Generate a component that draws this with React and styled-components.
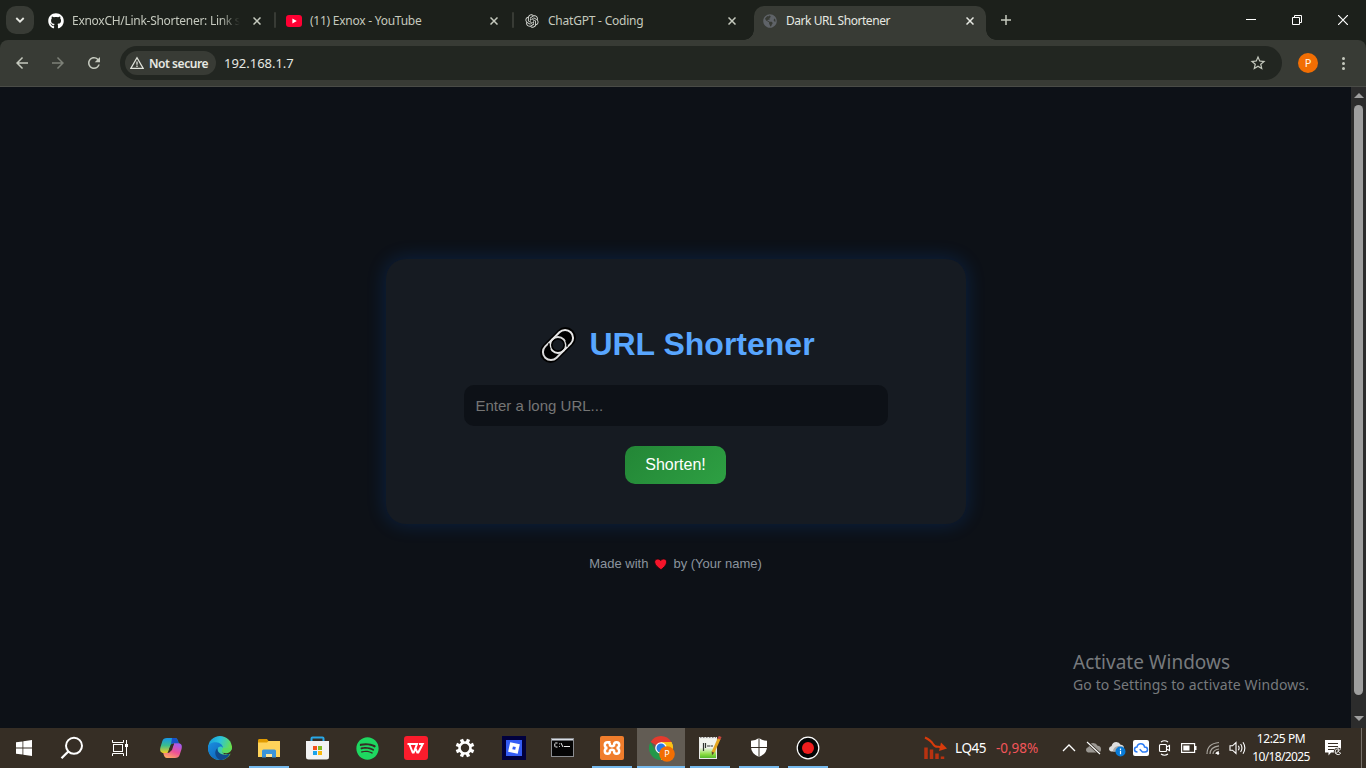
import React from "react";
import styled, { createGlobalStyle, css } from "styled-components";
import { FaGithub, FaGlobeAmericas, FaSpotify } from "react-icons/fa";
import { RiOpenaiFill } from "react-icons/ri";
import { MdArrowBack, MdArrowForward, MdRefresh, MdStarBorder } from "react-icons/md";

const uiFont = `"Noto Sans", "Open Sans", sans-serif`;

const GlobalStyle = createGlobalStyle`
  * { box-sizing: border-box; }
  body { margin: 0; background: #0d1117; overflow: hidden; }
  svg { display: block; flex: none; }
`;

const Screen = styled.div`
  width: 1366px;
  height: 768px;
  display: flex;
  flex-direction: column;
  overflow: hidden;
  font-family: ${uiFont};
  background: #1c201b;
`;

/* ---------- Browser chrome ---------- */

const TabStrip = styled.div`
  height: 40px;
  flex: none;
  display: flex;
  align-items: flex-end;
  padding-left: 6px;
  background: #1c201b;
`;

const TabSearch = styled.div`
  width: 28px;
  height: 28px;
  margin: 0 6px 6px 0;
  border-radius: 10px;
  background: #383b35;
  display: grid;
  place-items: center;
`;

const Tab = styled.div`
  position: relative;
  width: 232px;
  height: 34px;
  margin-right: 6px;
  padding: 0 12px 5px 8px;
  display: flex;
  align-items: center;
  color: ${(p) => (p.$active ? "#e6e8e2" : "#c5c9be")};
  ${(p) =>
    p.$active &&
    css`
      background: #383b35;
      border-radius: 10px 10px 0 0;
      &::before,
      &::after {
        content: "";
        position: absolute;
        bottom: 0;
        width: 10px;
        height: 10px;
      }
      &::before {
        left: -10px;
        background: radial-gradient(circle at 0 0, transparent 9.5px, #383b35 10px);
      }
      &::after {
        right: -10px;
        background: radial-gradient(circle at 100% 0, transparent 9.5px, #383b35 10px);
      }
    `}
  ${(p) =>
    p.$divided &&
    css`
      &::after {
        content: "";
        position: absolute;
        right: -4px;
        top: 6px;
        width: 2px;
        height: 16px;
        border-radius: 1px;
        background: #383b35;
      }
    `}
`;

const Favicon = styled.span`
  width: 16px;
  height: 16px;
  margin-right: 8px;
  display: grid;
  place-items: center;
  flex: none;
`;

const TabTitle = styled.span`
  flex: 1;
  white-space: nowrap;
  font-size: 12px;
  line-height: 18px;
  letter-spacing: ${(p) => p.$spacing || "0"};
  margin-right: 6px;
  ${(p) => p.$fade && "mask-image: linear-gradient(90deg, #000 148px, transparent 168px);"}
`;

const NewTab = styled.div`
  width: 28px;
  height: 28px;
  margin-bottom: 6px;
  display: grid;
  place-items: center;
`;

const WindowControls = styled.div`
  margin-left: auto;
  height: 40px;
  display: flex;
`;

const WindowButton = styled.div`
  width: 46px;
  height: 40px;
  display: grid;
  place-items: center;
`;

const ToolbarBack = styled.div`
  background: #1c201b;
  flex: none;
`;

const Toolbar = styled.div`
  height: 47px;
  display: flex;
  align-items: center;
  background: #383b35;
  border-radius: 8px 8px 0 0;
  border-bottom: 1px solid #4a4c47;
  padding: 0 4px;
`;

const NavButton = styled.div`
  width: 36px;
  height: 34px;
  display: grid;
  place-items: center;
  color: ${(p) => (p.$dim ? "#7d8178" : "#c5c9be")};
`;

const Omnibox = styled.div`
  width: 1162px;
  height: 34px;
  margin-left: 8px;
  padding: 0 15px 0 5px;
  border-radius: 17px;
  background: #222621;
  display: flex;
  align-items: center;
  color: #e6e8e2;
`;

const SecurityChip = styled.div`
  width: 91px;
  height: 24px;
  padding-left: 5px;
  border-radius: 12px;
  background: #383b35;
  display: flex;
  align-items: center;
  gap: 5px;
  font-size: 12px;
  font-weight: 600;
  letter-spacing: -0.45px;
  white-space: nowrap;
`;

const Address = styled.span`
  flex: 1;
  margin-left: 8px;
  font-size: 13px;
  letter-spacing: -0.02px;
  line-height: 18px;
  margin-bottom: 1px;
`;

const Avatar = styled.div`
  width: 20px;
  height: 20px;
  margin-left: 16px;
  border-radius: 50%;
  background: #f26e03;
  color: #fff3e6;
  font-size: 11px;
  line-height: 20px;
  text-align: center;
`;

const MenuDots = styled.div`
  width: 19px;
  margin-left: 16px;
  display: flex;
  flex-direction: column;
  align-items: center;
  gap: 2px;
`;

const Dot = styled.i`
  width: 3px;
  height: 3px;
  border-radius: 50%;
  background: #c5c9be;
`;

/* ---------- Web page ---------- */

const Viewport = styled.div`
  position: relative;
  flex: 1;
  min-height: 0;
  display: flex;
`;

const Page = styled.main`
  flex: 1;
  padding-top: 172px;
  display: flex;
  flex-direction: column;
  align-items: center;
  background: #0d1117;
  font-family: "Liberation Sans", Arial, sans-serif;
`;

const Card = styled.section`
  width: 580px;
  height: 265px;
  padding-top: 65px;
  display: flex;
  flex-direction: column;
  align-items: center;
  border-radius: 20px;
  background: #161b22;
  box-shadow: 0 0 20px rgba(0, 110, 255, 0.2);
`;

const Heading = styled.h1`
  height: 41px;
  margin: 0 0 20px;
  display: flex;
  align-items: center;
  gap: 12px;
  padding-left: 3px;
  color: #58a6ff;
  font-size: 32px;
  line-height: 41px;
  white-space: nowrap;
`;

const UrlInput = styled.input`
  width: 424px;
  height: 41px;
  padding: 0 12px;
  border: 0;
  border-radius: 10px;
  outline: 0;
  background: #0d1117;
  color: #c9d1d9;
  font: 15px "Liberation Sans", Arial, sans-serif;
  &::placeholder { color: #757575; }
`;

const ShortenButton = styled.button`
  width: 101px;
  height: 38px;
  margin-top: 20px;
  padding: 0;
  border: 0;
  border-radius: 10px;
  background: linear-gradient(135deg, #238636, #2ea043);
  color: #fff;
  font: 16px "Liberation Sans", Arial, sans-serif;
`;

const Footer = styled.footer`
  margin-top: 31px;
  display: flex;
  align-items: center;
  gap: 5px;
  color: #8b949e;
  font-size: 13px;
  line-height: 18px;
`;

const Scrollbar = styled.div`
  width: 15px;
  display: flex;
  flex-direction: column;
  align-items: center;
  background: #2c2c2c;
`;

const ScrollArrow = styled.div`
  width: 0;
  height: 0;
  border: solid transparent;
  border-width: ${(p) => (p.$down ? "5px 5px 0" : "0 5px 5px")};
  border-color: ${(p) => (p.$down ? "#9f9f9f transparent transparent" : "transparent transparent #9f9f9f")};
  margin: ${(p) => (p.$down ? "auto 0 7px" : "6px 0 7px")};
`;

const ScrollThumb = styled.div`
  width: 9px;
  height: 590px;
  border-radius: 5px;
  background: #9f9f9f;
`;

/* Floats over the page content in the lower right corner. */
const Watermark = styled.aside`
  position: absolute;
  left: 1073px;
  bottom: 33px;
  color: #777a7d;
  white-space: nowrap;
`;

const WatermarkTitle = styled.div`
  font-size: 19px;
  line-height: 25px;
`;

const WatermarkText = styled.div`
  font-size: 14px;
  line-height: 20px;
  letter-spacing: 0.12px;
`;

/* ---------- Taskbar ---------- */

const Taskbar = styled.nav`
  height: 40px;
  flex: none;
  display: flex;
  background: #362e25;
  color: #fff;
`;

const TaskGroup = styled.div`
  display: flex;
  gap: ${(p) => p.$gap || 0}px;
  margin-right: ${(p) => p.$after || 0}px;
`;

const TaskItem = styled.div`
  width: 48px;
  height: 40px;
  display: grid;
  place-items: center;
  background: ${(p) => (p.$active ? "#625c54" : "transparent")};
  box-shadow: ${(p) => (p.$active ? "inset 0 -2px #76b9ed" : "none")};
  ${(p) =>
    p.$running &&
    css`
      background: linear-gradient(#76b9ed, #76b9ed) center bottom / 40px 2px no-repeat;
    `}
`;

const Ticker = styled.div`
  margin-left: 92px;
  width: 133px;
  display: flex;
  align-items: center;
  font-size: 13.5px;
  white-space: nowrap;
`;

const TickerName = styled.span`
  width: 41px;
  margin-left: 7px;
  letter-spacing: -0.4px;
`;

const TickerChange = styled.span`
  color: #f2555a;
  letter-spacing: -0.05px;
`;

const Tray = styled.div`
  display: flex;
`;

const TrayIcon = styled.div`
  width: 24px;
  height: 40px;
  display: grid;
  place-items: center;
`;

const Clock = styled.div`
  width: 64px;
  padding-top: 2px;
  font-size: 12px;
  line-height: 18px;
  letter-spacing: ${(p) => p.$spacing};
  text-align: center;
  white-space: nowrap;
`;

const ClockDate = styled.div`
  letter-spacing: -0.65px;
`;

const ClockTime = styled.div`
  letter-spacing: -0.45px;
`;

const Notifications = styled.div`
  width: 41px;
  display: grid;
  place-items: center;
`;

const ShowDesktop = styled.div`
  width: 5px;
  margin-left: auto;
  border-left: 1px solid #77716a;
`;

/* ---------- Icons ---------- */

const CloseIcon = ({ color }) => (
  <svg width="8" height="8" viewBox="0 0 8 8" stroke={color} strokeWidth="1.5">
    <path d="M.5.5l7 7M7.5.5l-7 7" />
  </svg>
);

const YouTubeIcon = () => (
  <svg width="16" height="12" viewBox="0 0 16 12">
    <rect width="16" height="12" rx="3" fill="#ff0033" />
    <path d="M6.4 3.4v5.2L10.8 6z" fill="#fff" />
  </svg>
);

const WarningIcon = () => (
  <svg width="14" height="14" viewBox="0 0 14 14" fill="none" stroke="#dfe2da" strokeWidth="1.3">
    <path d="M7 1.7L13.1 12.3H.9z" />
    <path d="M7 5.4v3.4M7 9.6v1.4" />
  </svg>
);

const ChainIcon = () => (
  <svg width="38" height="38" viewBox="0 0 38 38" fill="none">
    <g transform="rotate(-45 19 19)">
      <rect x="-2" y="8.500" width="42" height="21" rx="10.500" fill="#000" />
      <rect x="1" y="11" width="26" height="16" rx="8" stroke="#d9d9d9" strokeWidth="2" />
      <rect x="11" y="11" width="26" height="16" rx="8" stroke="#e6e6e6" strokeWidth="2" />
      <circle cx="19" cy="19" r="5.300" fill="#161b22" />
      <path d="M10.300 16.500a9.300 9.300 0 0 1 3.500-5M27.700 21.500a9.300 9.300 0 0 1-3.500 5" stroke="#000" strokeWidth="1.500" />
    </g>
  </svg>
);

const HeartIcon = () => (
  <svg width="15" height="14" viewBox="0 0 15 14">
    <path
      d="M8 12.700C5.500 11 1.800 8.200 1.600 5 1.600 1.900 5.700.9 7.700 3.600 9.700.9 13.700 1.900 13.700 5 13.500 8.200 10.300 11 8 12.700z"
      fill="#f5142a"
      stroke="#14080b"
      strokeWidth=".8"
    />
  </svg>
);

const WindowsIcon = () => (
  <svg width="16" height="16" viewBox="0 0 16 16" fill="#fff">
    <path d="M0 2.300L6.500 1.400V7.600H0zM7.300 1.300L16 0v7.600H7.300zM0 8.400h6.500v6.200L0 13.700zM7.300 8.400H16V16l-8.700-1.200z" />
  </svg>
);

const SearchIcon = () => (
  <svg width="24" height="24" viewBox="0 0 24 24" fill="none" stroke="#fff" strokeWidth="2">
    <circle cx="14" cy="9.800" r="8" />
    <path d="M8.300 15.500L1.500 22.300" strokeWidth="2.300" />
  </svg>
);

const TaskViewIcon = () => (
  <svg width="18" height="16" viewBox="0 0 18 16" fill="none" stroke="#fff" strokeWidth="1">
    <rect x="2.500" y="4.500" width="9" height="7" />
    <path d="M1.500 0v2.500h11V0M1.500 16v-2.500h11V16M15.500 0v16" />
    <rect x="14" y="4" width="3" height="3" fill="#fff" stroke="none" />
  </svg>
);

const CopilotIcon = () => (
  <svg width="24" height="24" viewBox="0 0 24 24">
    <defs>
      <linearGradient id="copA" x1="0" y1="0" x2="0" y2="1">
        <stop offset="0" stopColor="#1697ea" />
        <stop offset=".5" stopColor="#3bbd8c" />
        <stop offset="1" stopColor="#f3cd22" />
      </linearGradient>
      <linearGradient id="copB" x1=".7" y1="0" x2=".2" y2="1">
        <stop offset="0" stopColor="#a35df2" />
        <stop offset=".5" stopColor="#ee5096" />
        <stop offset="1" stopColor="#ffad62" />
      </linearGradient>
    </defs>
    <path d="M8 2h8c2 0 2.500 1.500 3 3l.7 2.200H15c-2 0-3 1-3.600 3L8.500 17H5c-3.500 0-4.500-2.300-3.500-6L3.300 5.200C4 3 5.500 2 8 2z" fill="url(#copA)" />
    <path d="M13 2h3c2 0 2.500 1.500 3 3l.7 2.200H15c-1.500 0-2.500.6-3.100 1.700z" fill="#1851c9" />
    <path d="M16 22H8c-2 0-2.700-1.500-3.200-3L4.200 17H8.500c2 0 3-1 3.600-3L15 7.200h4c3.500 0 4.500 2.300 3.500 6L20.700 18.800C20 21 18.500 22 16 22z" fill="url(#copB)" />
    <path d="M10.300 12.500l1.600-4 3.100-.8-2.100 6.500-3 1.500z" fill="#362e25" />
  </svg>
);

const EdgeIcon = () => (
  <svg width="24" height="24" viewBox="0 0 24 24">
    <defs>
      <linearGradient id="edgeTop" x1="0" y1="0" x2="1" y2=".4">
        <stop offset="0" stopColor="#1597da" />
        <stop offset=".5" stopColor="#2bc3dc" />
        <stop offset="1" stopColor="#6ce146" />
      </linearGradient>
      <linearGradient id="edgeLow" x1="0" y1="0" x2="1" y2="1">
        <stop offset="0" stopColor="#1a8fe0" />
        <stop offset="1" stopColor="#0b57ae" />
      </linearGradient>
    </defs>
    <circle cx="12" cy="12" r="12" fill="url(#edgeTop)" />
    <path d="M0 12C.3 7.500 4.500 6 8 6.200c4 .2 7 2.800 7 5.800-1-2.200-4.500-2-5.300.5-1.200 4 3.300 7.500 8 6.500 1.700-.4 3-1 4.300-1.800C20 21.500 16.300 24 12 24 5 24 0 18.500 0 12z" fill="url(#edgeLow)" />
    <path d="M9.500 12c-3.500 3-3 9 2.500 12 4.300 0 8-2.500 10-6.800-4.500 3-9.500 1.300-11.500-1.200-.9-1.200-1.200-2.500-1-4z" fill="#114a8b" />
    <path d="M14.500 15.600c-1 .4 1.500 2.200 4.500 1.600 3-.5 5-3 5-5.200l1 5-3 1-6 .2z" fill="#362e25" />
    <path d="M15 12c.2 1.500-1 2-1 3 0 1.500 2.500 2.200 5 1.600 2.700-.6 4.700-2.600 5-4.600z" fill="#5adb60" />
  </svg>
);

const ExplorerIcon = () => (
  <svg width="22" height="19" viewBox="0 0 22 19">
    <path d="M0 1.500Q0 0 1 0h8l1.500 2H21q1 0 1 1v4H0z" fill="#e09a00" />
    <path d="M0 3.500h9L10.500 2H22v16H0z" fill="#ffd35a" />
    <path d="M4 18.500V12q0-1.500 1.500-1.500h11Q18 10.500 18 12v6.500h-4V15H8v3.500z" fill="#3b94da" />
    <path d="M8 15h6v3H8z" fill="#ffe59b" />
  </svg>
);

const StoreIcon = () => (
  <svg width="24" height="24" viewBox="0 0 24 24">
    <path d="M5.500 6V2.500Q5.500 1.500 6.500 1.500h10q1 0 1 1V6" fill="none" stroke="#28a8e8" strokeWidth="2" />
    <path d="M0 5h23v16q0 2.500-2.500 2.500H2.500Q0 23.500 0 21z" fill="#f2f2f2" />
    <path d="M7 10h4v4H7z" fill="#f1511b" />
    <path d="M12 10h4v4h-4z" fill="#80bb22" />
    <path d="M7 15h4v4H7z" fill="#1aa3ea" />
    <path d="M12 15h4v4h-4z" fill="#fbb80c" />
  </svg>
);

const WpsIcon = () => (
  <svg width="24" height="24" viewBox="0 0 24 24">
    <rect width="24" height="24" rx="3" fill="#fb1c2c" />
    <path d="M3.500 8H13L9.700 16.500h-1L5.300 8M11 11.500l2.300 5h1L18.700 8H15" fill="none" stroke="#fff" strokeWidth="2" />
  </svg>
);

const GearIcon = () => (
  <svg width="20" height="20" viewBox="-10 -10 20 20">
    <circle r="5.500" fill="none" stroke="#fff" strokeWidth="2.600" />
    {[22.5, 67.5, 112.5, 157.5, 202.5, 247.5, 292.5, 337.5].map((a) => (
      <rect key={a} x="-1.700" y="-9.300" width="3.400" height="3.500" fill="#fff" transform={`rotate(${a})`} />
    ))}
  </svg>
);

const RobloxIcon = () => (
  <svg width="24" height="24" viewBox="0 0 24 24">
    <path d="M0 0h24v24H0z" fill="#00003e" />
    <path d="M4 4h16v16H4z" fill="#345cf5" />
    <path d="M8.200 6.200l9.600 2.100-2.100 9.500-9.600-2.100z" fill="#fff" />
    <path d="M10.900 10.400l2.900.6-.6 2.800-2.900-.6z" fill="#345cf5" />
  </svg>
);

const TerminalIcon = () => (
  <svg width="24" height="20" viewBox="0 0 24 20">
    <rect x=".5" y=".5" width="22" height="18" fill="#050505" stroke="#8b8d90" />
    <path d="M1 1h21v1.500H1z" fill="#d9dde5" />
    <path d="M6.500 5h-2l-.7.7v2.600l.7.700h2M8.500 5.500v.8M8.500 8v.8M10 5l2 4M13 8.500h6" stroke="#eee" fill="none" strokeWidth="1" />
  </svg>
);

const XamppIcon = () => (
  <svg width="24" height="24" viewBox="0 0 24 24">
    <rect width="24" height="24" rx="2" fill="#f07d2c" />
    <path
      d="M10.500 6.200H7.500Q4.800 6.200 4.800 9q0 2.500 2.500 3-2.500.5-2.500 3 0 2.800 2.700 2.800 2.500 0 2.500-2.800v-.5q2-1.500 4 0v.5q0 2.800 2.500 2.800 2.700 0 2.700-2.800 0-2.500-2.500-3 2.500-.5 2.500-3 0-2.800-2.700-2.800Q14 6.200 14 9v.5q-2 1.300-4 0V9q0-2.800-2.500-2.800"
      fill="none"
      stroke="#fff"
      strokeWidth="2.500"
    />
  </svg>
);

const ChromeIcon = () => (
  <svg width="28" height="28" viewBox="-1 -1 28 28">
    <path d="M13 13L2.600 7A12 12 0 0 1 23.400 7z" fill="#e33b2e" />
    <path d="M13 13h11.900A12 12 0 0 0 23.400 7H13z" fill="#fbc116" />
    <path d="M13 13l10.400-6A12 12 0 0 1 13 25z" fill="#fbc116" />
    <path d="M13 13v12A12 12 0 0 1 2.600 7L7.800 16z" fill="#229849" />
    <circle cx="13" cy="13" r="5.800" fill="#fff" />
    <circle cx="13" cy="13" r="4.500" fill="#2878e7" />
    <circle cx="19" cy="19" r="7.800" fill="#f26e03" />
    <text x="19" y="22.300" textAnchor="middle" fill="#fff" fontFamily="Noto Sans, sans-serif" fontSize="9">P</text>
  </svg>
);

const NotepadIcon = () => (
  <svg width="24" height="24" viewBox="0 0 24 24">
    <defs>
      <linearGradient id="note" x1="0" y1="0" x2="0" y2="1">
        <stop offset=".45" stopColor="#f1f4ee" />
        <stop offset=".8" stopColor="#8cdd42" />
        <stop offset="1" stopColor="#54b82c" />
      </linearGradient>
    </defs>
    <path d="M1 1h18v22H1z" fill="#e9eae7" />
    <path d="M2 3h16v19H2z" fill="url(#note)" />
    <path d="M2 1.500h16" stroke="#868686" strokeDasharray="1.500 1.500" />
    <path d="M5.500 7v8M7.500 7v5M9 10h3M12.500 10h2.500" stroke="#303530" strokeWidth="1.200" />
    <path d="M21.200 2.500L15 16.300" stroke="#e5a71f" strokeWidth="3" />
    <path d="M22.200.5L21 3.200" stroke="#c4453e" strokeWidth="3" />
    <path d="M13.600 15.500l2.700 1.200-2.300 2.500z" fill="#5d4728" />
  </svg>
);

const ShieldIcon = () => (
  <svg width="18" height="20" viewBox="0 0 18 20">
    <path d="M9 0q3.500 2.700 8 2.700V9Q17 15.500 9 19 1 15.500 1 9V2.700Q5.500 2.700 9 0z" fill="#fff" />
    <path d="M9 0v20M0 9.500h18" stroke="#362e25" strokeWidth="1" />
  </svg>
);

const RecordIcon = () => (
  <svg width="24" height="24" viewBox="0 0 24 24">
    <circle cx="12" cy="12" r="10.800" fill="#050505" stroke="#fff" strokeWidth="1.200" />
    <circle cx="12" cy="12" r="6" fill="#ef1d1d" />
  </svg>
);

const FallingChartIcon = () => (
  <svg width="24" height="24" viewBox="0 0 24 24" fill="none" stroke="#d83b0b">
    <path d="M1 1.500Q7 4.500 9 8t6 2.700l3.500 1" strokeWidth="2" />
    <path d="M17 6.500l6 6-8 2.500" fill="#d83b0b" stroke="none" />
    <path d="M2 11.500V23M7.500 13.500V23M13 17.500V23M18.500 20.500V23" strokeWidth="3.500" stroke="#b93210" />
  </svg>
);

const CloudPath = "M4.500 12.500Q1 12.500 1 9.700 1 7.500 3.600 7 4.500 3 8.300 3q3 0 4.300 2.800 3.400.3 3.400 3.400 0 3.300-3.300 3.300z";

const trayIcons = [
  <svg width="14" height="8" viewBox="0 0 14 8" fill="none" stroke="#fff" strokeWidth="1.300">
    <path d="M1 7l6-6 6 6" />
  </svg>,
  <svg width="17" height="16" viewBox="0 0 17 16">
    <path d={CloudPath} fill="#9b9792" />
    <path d="M2 2l13 12" stroke="#362e25" strokeWidth="3" />
    <path d="M2 2l13 12" stroke="#fff" strokeWidth="1.100" />
  </svg>,
  <svg width="18" height="18" viewBox="0 0 18 18">
    <path d={CloudPath} fill="#dedede" />
    <path d="M5 12.500Q5 8 10 7l6 1v4.500z" fill="#aaa" />
    <circle cx="12.500" cy="12.500" r="5" fill="#087bd8" />
    <path d="M12.500 11.700v3.600M12.500 9.500V11" stroke="#fff" strokeWidth="1.200" />
  </svg>,
  <svg width="16" height="16" viewBox="0 0 16 16">
    <rect width="16" height="16" rx="2" fill="#fff" />
    <path d="M4.500 12Q1.500 12 1.500 9.500T4 7Q4.500 3.700 7.800 3.700T11.500 7Q14.500 7 14.500 9.500T12 12H9.500L6.700 9.200" fill="none" stroke="#2b7cf5" strokeWidth="1.500" />
  </svg>,
  <svg width="14" height="16" viewBox="0 0 14 16" fill="none" stroke="#fff" strokeWidth="1.100">
    <rect x="1.500" y="4.500" width="7" height="7" rx="1" />
    <path d="M8.500 7l3-1.500v5L8.500 9M3 2Q6.500-.5 10 2M3 14q3.500 2.500 7 0" />
  </svg>,
  <svg width="16" height="10" viewBox="0 0 16 10">
    <rect x=".6" y=".6" width="13" height="8.800" fill="none" stroke="#fff" strokeWidth="1.200" />
    <path d="M2.300 2.500h6.200v5H2.300zM14 3h1.500v4H14z" fill="#fff" />
  </svg>,
  <svg width="14" height="14" viewBox="0 0 14 14" fill="none" stroke="#aaa69f" strokeWidth="1.200">
    <path d="M1 13Q1 2.500 13 1.500M4 13Q4 6 13 4.800M7 13Q7 9 13 8" />
    <path d="M10 13q.3-2 3-2.200" stroke="#fff" />
    <circle cx="12" cy="12.500" r="1.200" fill="#fff" stroke="none" />
  </svg>,
  <svg width="17" height="14" viewBox="0 0 17 14" fill="none" stroke="#fff" strokeWidth="1.100">
    <path d="M1 4.800h2.500L7 1.500v11L3.500 9.200H1zM9.300 4.700q1.600 2.300 0 4.600M11.600 3q2.700 4 0 8M14 1.300q3.700 5.700 0 11.400" />
  </svg>,
];

const NoticeIcon = () => (
  <svg width="17" height="16" viewBox="0 0 17 16">
    <path d="M0 0h16v12.500H6L3.500 15.500v-3H0z" fill="#fff" />
    <path d="M3 3.500h10M3 6.500h10M3 9.500h6" stroke="#362e25" strokeWidth="1.200" />
    <circle cx="12.800" cy="11.800" r="4" fill="#362e25" />
    <path d="M13.500 8.700a3 3 0 1 0 2.200 4.500 3.500 3.500 0 0 1-2.200-4.500zM10.500 14l5-5" fill="none" stroke="#fff" strokeWidth=".9" />
  </svg>
);

/* ---------- Data ---------- */

const tabs = [
  { title: "ExnoxCH/Link-Shortener: Link sh", icon: <FaGithub size={16} color="#fff" />, divided: true, fade: true, spacing: "-0.28px" },
  { title: "(11) Exnox - YouTube", icon: <YouTubeIcon />, divided: true, spacing: "-0.25px" },
  { title: "ChatGPT - Coding", icon: <RiOpenaiFill size={16} color="#dadcd7" />, spacing: "-0.22px" },
  { title: "Dark URL Shortener", icon: <FaGlobeAmericas size={14} color="#5f6368" />, active: true, spacing: "-0.45px" },
];

const pinnedApps = [
  { icon: <CopilotIcon /> },
  { icon: <EdgeIcon /> },
  { icon: <ExplorerIcon />, running: true },
  { icon: <StoreIcon /> },
  { icon: <FaSpotify size={23} color="#1ed760" /> },
  { icon: <WpsIcon /> },
  { icon: <GearIcon /> },
  { icon: <RobloxIcon /> },
  { icon: <TerminalIcon /> },
  { icon: <XamppIcon />, running: true },
  { icon: <ChromeIcon />, active: true },
  { icon: <NotepadIcon />, running: true },
  { icon: <ShieldIcon />, running: true },
  { icon: <RecordIcon />, running: true },
];

export default function App() {
  return (
    <Screen>
      <GlobalStyle />
      <TabStrip>
        <TabSearch>
          <svg width="10" height="6" viewBox="0 0 10 6" fill="none" stroke="#e6e8e2" strokeWidth="1.800">
            <path d="M1.300 1l3.700 3.700L8.700 1" />
          </svg>
        </TabSearch>
        {tabs.map((t) => (
          <Tab key={t.title} $active={t.active} $divided={t.divided}>
            <Favicon>{t.icon}</Favicon>
            <TabTitle $fade={t.fade} $spacing={t.spacing}>{t.title}</TabTitle>
            <CloseIcon color={t.active ? "#e6e8e2" : "#c5c9be"} />
          </Tab>
        ))}
        <NewTab>
          <svg width="10" height="10" viewBox="0 0 10 10" stroke="#c5c9be" strokeWidth="1.500">
            <path d="M5 0v10M0 5h10" />
          </svg>
        </NewTab>
        <WindowControls>
          <WindowButton>
            <svg width="10" height="10" viewBox="0 0 10 10"><path d="M0 4h10v1H0z" fill="#fff" /></svg>
          </WindowButton>
          <WindowButton>
            <svg width="10" height="10" viewBox="0 0 10 10" fill="none" stroke="#fff">
              <path d="M.5 2.500h7v7h-7zM2.500 2.500v-2h7v7h-2" />
            </svg>
          </WindowButton>
          <WindowButton>
            <svg width="10" height="10" viewBox="0 0 10 10" stroke="#fff" strokeWidth="1.200">
              <path d="M0 0l10 10M10 0L0 10" />
            </svg>
          </WindowButton>
        </WindowControls>
      </TabStrip>

      <ToolbarBack>
        <Toolbar>
          <NavButton><MdArrowBack size={18} /></NavButton>
          <NavButton $dim><MdArrowForward size={18} /></NavButton>
          <NavButton><MdRefresh size={18} /></NavButton>
          <Omnibox>
            <SecurityChip>
              <WarningIcon />
              Not secure
            </SecurityChip>
            <Address>192.168.1.7</Address>
            <MdStarBorder size={18} color="#c5c9be" />
          </Omnibox>
          <Avatar>P</Avatar>
          <MenuDots><Dot /><Dot /><Dot /></MenuDots>
        </Toolbar>
      </ToolbarBack>

      <Viewport>
        <Page>
          <Card>
            <Heading><ChainIcon />URL Shortener</Heading>
            <UrlInput placeholder="Enter a long URL..." />
            <ShortenButton>Shorten!</ShortenButton>
          </Card>
          <Footer>
            <span>Made with</span>
            <HeartIcon />
            <span>by (Your name)</span>
          </Footer>
        </Page>
        <Scrollbar>
          <ScrollArrow />
          <ScrollThumb />
          <ScrollArrow $down />
        </Scrollbar>
        <Watermark>
          <WatermarkTitle>Activate Windows</WatermarkTitle>
          <WatermarkText>Go to Settings to activate Windows.</WatermarkText>
        </Watermark>
      </Viewport>

      <Taskbar>
        <TaskGroup $after={3}>
          <TaskItem><WindowsIcon /></TaskItem>
          <TaskItem><SearchIcon /></TaskItem>
          <TaskItem><TaskViewIcon /></TaskItem>
        </TaskGroup>
        <TaskGroup $gap={1}>
          {pinnedApps.map((a, i) => (
            <TaskItem key={i} $running={a.running} $active={a.active}>{a.icon}</TaskItem>
          ))}
        </TaskGroup>
        <Ticker>
          <FallingChartIcon />
          <TickerName>LQ45</TickerName>
          <TickerChange>-0,98%</TickerChange>
        </Ticker>
        <Tray>
          {trayIcons.map((icon, i) => (
            <TrayIcon key={i}>{icon}</TrayIcon>
          ))}
        </Tray>
        <Clock>
          <ClockTime>12:25 PM</ClockTime>
          <ClockDate>10/18/2025</ClockDate>
        </Clock>
        <Notifications><NoticeIcon /></Notifications>
        <ShowDesktop />
      </Taskbar>
    </Screen>
  );
}
